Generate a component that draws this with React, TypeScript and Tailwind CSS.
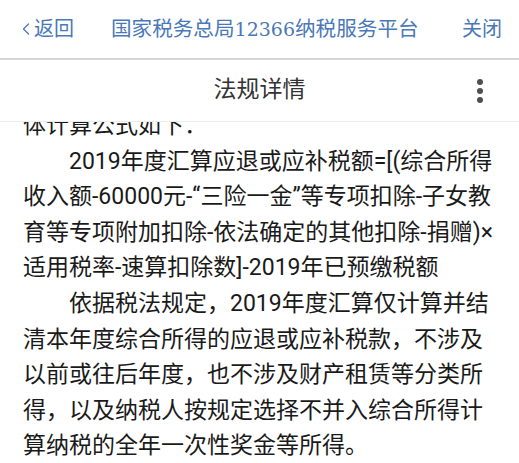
import { ChevronLeft } from "lucide-react";

const cjk = { fontFamily: "Roboto, 'Noto Sans CJK SC', sans-serif" };

export default function App() {
	return (
		<div className="w-[519px] h-[463px] bg-white overflow-hidden flex flex-col" style={cjk}>
			{/* 顶部导航 */}
			<header className="h-[60px] shrink-0 flex items-center pl-[16px] pr-[17px] text-[20px] text-[#4a78b8] border-b-2 border-[#d6d6d6]">
				<div className="flex items-center">
					<ChevronLeft className="w-[20px] h-[22px] -mr-[2px]" strokeWidth={1.5} />
					<span>返回</span>
				</div>
				<div className="ml-[37px] text-[20.6px]">
					国家税务总局
					<span style={{ fontFamily: "'DejaVu Serif', serif" }} className="text-[19px]">
						12366
					</span>
					纳税服务平台
				</div>
				<span className="ml-auto">关闭</span>
			</header>

			{/* 标题栏 */}
			<div className="h-[62px] shrink-0 relative flex items-center justify-center border-b border-[#ececec]">
				<h1 className="text-[23px] text-[#333333]">法规详情</h1>
				<div className="absolute right-[36px] top-[19px] flex flex-col gap-[3px]">
					<span className="w-[6px] h-[6px] rounded-full bg-[#4f4f4f]" />
					<span className="w-[6px] h-[6px] rounded-full bg-[#4f4f4f]" />
					<span className="w-[6px] h-[6px] rounded-full bg-[#4f4f4f]" />
				</div>
			</div>

			{/* 正文 */}
			<main className="flex-1 overflow-hidden">
				<div className="-mt-[14px] pl-[23px] w-[498px] text-[23px] leading-[35.6px] text-[#1a1a1a]">
					<p>体计算公式如下：</p>
					<p className="indent-[2em]">
						2019年度汇算应退或应补税额=[(综合所得收入额-60000元-“三险一金”等专项扣除-子女教育等专项附加扣除-依法确定的其他扣除-捐赠)×适用税率-速算扣除数]-2019年已预缴税额
					</p>
					<p className="indent-[2em]">
						依据税法规定，2019年度汇算仅计算并结清本年度综合所得的应退或应补税款，不涉及以前或往后年度，也不涉及财产租赁等分类所得，以及纳税人按规定选择不并入综合所得计算纳税的全年一次性奖金等所得。
					</p>
				</div>
			</main>
		</div>
	);
}
